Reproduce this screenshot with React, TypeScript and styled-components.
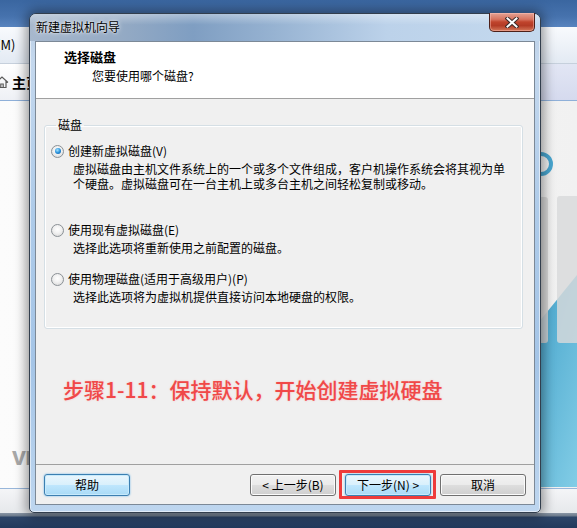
import React from "react";
import styled, { createGlobalStyle, css } from "styled-components";

const CJK = `"Noto Sans CJK SC", "Noto Sans", sans-serif`;

const GlobalStyle = createGlobalStyle`
  html, body { margin: 0; padding: 0; }
  body {
    width: 577px; height: 528px; overflow: hidden;
    font-family: ${CJK}; font-size: 12px; color: #000;
  }
`;

const Desktop = styled.div`
  position: relative;
  width: 577px;
  height: 528px;
  overflow: hidden;
  display: flex;
  flex-direction: column;
  background: #f2f2f2;
`;

const HostTitleBar = styled.div`
  height: 27px;
  flex: none;
  background: linear-gradient(180deg, #3a66a0 0%, #4672ad 60%, #5884bf 100%);
`;

const MenuBar = styled.div`
  height: 36px;
  flex: none;
  display: flex;
  align-items: center;
  overflow: hidden;
  background: linear-gradient(180deg, #f8fafd 0%, #e3eaf3 100%);
  border-bottom: 1px solid #c6d0dc;
`;

const MenuItem = styled.span`
  margin-left: -17px;
  white-space: nowrap;
  font-size: 13px;
  line-height: 16px;
`;

const Toolbar = styled.div`
  height: 36px;
  flex: none;
  display: flex;
  align-items: stretch;
  background: linear-gradient(180deg, #e2e6f4 0%, #d5daee 100%);
  border-bottom: 1px solid #8fb0d9;
`;

const HomeTab = styled.div`
  display: flex;
  align-items: center;
  gap: 3px;
  margin-left: -5px;
  padding-right: 40px;
  background: linear-gradient(180deg, #ffffff 0%, #eef0f5 100%);
  font-weight: bold;
  font-size: 14px;
`;

const Content = styled.div`
  flex: 1;
  display: flex;
  justify-content: space-between;
  background: linear-gradient(90deg, #fcfcfc 0%, #f1f1f1 100%);
`;

const LeftPane = styled.div`
  display: flex;
  flex-direction: column;
  justify-content: flex-end;
  padding: 0 0 20px 12px;
`;

const Logo = styled.span`
  font-family: "Liberation Sans", Arial, sans-serif;
  font-weight: bold;
  font-size: 25px;
  line-height: 24px;
  letter-spacing: -1px;
  color: #a8a8a8;
`;

const StatusBar = styled.div`
  height: 24px;
  flex: none;
  border-top: 1px solid #98b6da;
  background: linear-gradient(180deg, #f4f5f7 0%, #e6e8eb 100%);
`;

const Taskbar = styled.div`
  height: 15px;
  flex: none;
  background: linear-gradient(180deg, #8a96a5 0px, #6c7a8c 3px, #2d4568 4px, #22395c 100%);
`;

/* ---------- dialog ---------- */

const Dialog = styled.div`
  position: absolute;
  left: 29px;
  top: 13px;
  width: 512px;
  height: 500px;
  box-sizing: border-box;
  display: flex;
  flex-direction: column;
  border: 1px solid #323e4d;
  border-radius: 7px 7px 5px 5px;
  background: linear-gradient(180deg, #b9cde3 0%, #c4d8ee 10%, #aecbe9 40%, #a5c5e7 70%, #bed6ef 100%);
  box-shadow: 0 0 12px 3px rgba(0, 0, 0, 0.4), inset 0 0 0 1px rgba(255, 255, 255, 0.55);
`;

const TitleBar = styled.div`
  height: 27px;
  flex: none;
  display: flex;
  justify-content: space-between;
  align-items: flex-start;
  padding-left: 6px;
  border-radius: 6px 6px 0 0;
  background:
    linear-gradient(180deg, rgba(255,255,255,0.35) 0%, rgba(255,255,255,0) 40%),
    linear-gradient(90deg, #a7b8cd 0%, #94aac4 18%, #7f9ec2 32%, #97b3d2 48%, #bcd2ea 70%, #c4d9ee 100%);
`;

const TitleText = styled.span`
  font-size: 12px;
  line-height: 25px;
  color: #000;
  text-shadow: 0 0 5px rgba(255, 255, 255, 0.9), 0 0 2px rgba(255, 255, 255, 0.9);
`;

const CloseButton = styled.div`
  width: 46px;
  height: 19px;
  margin-top: -1px;
  margin-right: 5px;
  box-sizing: border-box;
  display: flex;
  align-items: center;
  justify-content: center;
  border: 1px solid #4d2019;
  border-top: none;
  border-radius: 0 0 5px 5px;
  background: linear-gradient(180deg, #e4a394 0%, #d7735f 35%, #c0442c 50%, #b33b25 70%, #d4785a 100%);
  box-shadow: inset 0 0 0 1px rgba(255, 200, 190, 0.45);
`;

const Client = styled.div`
  flex: 1;
  margin: 0 5px 7px 5px;
  border: 1px solid #7c8997;
  background: #f0f0f0;
  display: flex;
  flex-direction: column;
  min-height: 0;
`;

const Header = styled.div`
  flex: none;
  box-sizing: border-box;
  height: 57px;
  padding: 7px 0 0 28px;
  background: #ffffff;
  border-bottom: 1px solid #a0a0a0;
`;

const HeaderTitle = styled.div`
  font-weight: bold;
  font-size: 13px;
  line-height: 16px;
`;

const HeaderSub = styled.div`
  margin: 3px 0 0 28px;
  font-size: 12px;
  line-height: 16px;
`;

const Body = styled.div`
  flex: 1;
  display: flex;
  flex-direction: column;
  padding: 0 11px 0 8px;
`;

const GroupBox = styled.fieldset`
  margin: 19px 0 0 0;
  padding: 11px 10px 24px 6px;
  border: 1px solid #d5dfe5;
  border-radius: 3px;
  min-width: 0;
  box-shadow: inset 0 0 0 1px #ffffff;
`;

const GroupLegend = styled.legend`
  padding: 0 2px;
  margin-left: 5px;
  font-size: 12px;
  line-height: 14px;
`;

const Option = styled.div<{ $spaced?: boolean }>`
  display: flex;
  flex-direction: column;
  margin-top: ${(p) => (p.$spaced ? "16px" : "0")};
`;

const OptionRow = styled.label`
  display: flex;
  align-items: center;
  gap: 4px;
  height: 16px;
  line-height: 16px;
`;

const Radio = styled.span<{ $checked?: boolean }>`
  position: relative;
  flex: none;
  width: 13px;
  height: 13px;
  box-sizing: border-box;
  border-radius: 50%;
  border: 1px solid #8b9196;
  background: radial-gradient(circle at 50% 40%, #ffffff 0%, #f1f1f1 45%, #d2d2d2 100%);
  ${(p) =>
    p.$checked &&
    css`
      &::after {
        content: "";
        position: absolute;
        left: 2.5px;
        top: 2.5px;
        width: 6px;
        height: 6px;
        border-radius: 50%;
        background: radial-gradient(circle at 40% 35%, #a6e4ff 0%, #2b93dc 50%, #0c4f98 100%);
      }
    `}
`;

const Desc = styled.div<{ $tall?: boolean }>`
  margin: 2px 0 0 22px;
  line-height: 15px;
  min-height: ${(p) => (p.$tall ? "45px" : "15px")};
`;

const DescLine = styled.div`
  height: 15px;
  line-height: 15px;
  white-space: nowrap;
`;

const Caption = styled.div`
  margin: 47px 0 0 19px;
  font-size: 21px;
  line-height: 26px;
  font-weight: 500;
  color: #f04848;
  text-shadow: 0 0 2px rgba(255, 130, 130, 0.45);
  white-space: nowrap;
`;

const Footer = styled.div`
  flex: none;
  display: flex;
  justify-content: space-between;
  padding: 9px 8px 8px 8px;
  border-top: 1px solid #a0a0a0;
`;

const ButtonGroup = styled.div`
  display: flex;
  gap: 9px;
`;

const Button = styled.button<{ $hot?: boolean }>`
  width: 86px;
  height: 22px;
  box-sizing: border-box;
  padding: 0;
  font-family: ${CJK};
  font-size: 12px;
  line-height: 18px;
  color: #000;
  border-radius: 3px;
  border: 1px solid #707070;
  background: linear-gradient(180deg, #f2f2f2 0%, #ebebeb 48%, #dddddd 52%, #cfcfcf 100%);
  box-shadow: inset 0 0 0 1px #fbfbfb;
  ${(p) =>
    p.$hot &&
    css`
      border-color: #3c7fb1;
      background: linear-gradient(180deg, #eaf6fd 0%, #d9f0fc 48%, #bee6fd 52%, #a9daf6 100%);
      box-shadow: inset 0 0 0 1px #c7eafc, 0 0 2px #5fb0e8;
    `}
`;

const HighlightWrap = styled.div`
  position: relative;
  display: flex;
`;

const RedBox = styled.span`
  position: absolute;
  left: -6px;
  right: -5px;
  top: -4px;
  bottom: -3px;
  border: 3px solid #ee3b3b;
  border-radius: 1px;
  pointer-events: none;
`;

const HomeIcon = () => (
  <svg width="14" height="14" viewBox="0 0 14 14">
    <path
      d="M1 7.5 L7 2 L13 7.5 M3 6 V12.5 H11 V6 M5.8 12.5 V9 H8.2 V12.5"
      fill="none"
      stroke="#5a5a5a"
      strokeWidth="1.2"
    />
  </svg>
);

const CloseGlyph = () => (
  <svg width="14" height="11" viewBox="0 0 14 11">
    <path d="M2.5 1.5 L11.5 9.5 M11.5 1.5 L2.5 9.5" stroke="#3b2a28" strokeWidth="4" strokeLinecap="square" />
    <path d="M2.5 1.5 L11.5 9.5 M11.5 1.5 L2.5 9.5" stroke="#ffffff" strokeWidth="2" strokeLinecap="square" />
  </svg>
);

const RightArt = () => (
  <svg width="60" height="386" viewBox="0 0 60 386">
    <defs>
      <linearGradient id="blueFill" x1="0" y1="0" x2="1" y2="1">
        <stop offset="0" stopColor="#3a9bc6" />
        <stop offset="1" stopColor="#82cde6" />
      </linearGradient>
    </defs>
    <polygon points="0,248 60,174 60,386 0,386" fill="url(#blueFill)" />
    <rect x="0" y="96" width="31" height="146" rx="3" fill="#d4d4d4" opacity="0.88" />
    <rect x="40" y="95" width="40" height="147" rx="3" fill="#d8d9da" opacity="0.82" />
    <circle cx="24" cy="63" r="10" fill="none" stroke="#49a6d0" strokeWidth="4" />
  </svg>
);

export default function App() {
  return (
    <>
      <GlobalStyle />
      <Desktop>
        <HostTitleBar />
        <MenuBar>
          <MenuItem>机(M)</MenuItem>
        </MenuBar>
        <Toolbar>
          <HomeTab>
            <HomeIcon />
            <span>主页</span>
          </HomeTab>
        </Toolbar>
        <Content>
          <LeftPane>
            <Logo>vmware</Logo>
          </LeftPane>
          <RightArt />
        </Content>
        <StatusBar />
        <Taskbar />

        <Dialog>
          <TitleBar>
            <TitleText>新建虚拟机向导</TitleText>
            <CloseButton>
              <CloseGlyph />
            </CloseButton>
          </TitleBar>
          <Client>
            <Header>
              <HeaderTitle>选择磁盘</HeaderTitle>
              <HeaderSub>您要使用哪个磁盘?</HeaderSub>
            </Header>
            <Body>
              <GroupBox>
                <GroupLegend>磁盘</GroupLegend>
                <Option>
                  <OptionRow>
                    <Radio $checked />
                    <span>创建新虚拟磁盘(V)</span>
                  </OptionRow>
                  <Desc $tall>
                    <DescLine>虚拟磁盘由主机文件系统上的一个或多个文件组成，客户机操作系统会将其视为单</DescLine>
                    <DescLine>个硬盘。虚拟磁盘可在一台主机上或多台主机之间轻松复制或移动。</DescLine>
                  </Desc>
                </Option>
                <Option $spaced>
                  <OptionRow>
                    <Radio />
                    <span>使用现有虚拟磁盘(E)</span>
                  </OptionRow>
                  <Desc>选择此选项将重新使用之前配置的磁盘。</Desc>
                </Option>
                <Option $spaced>
                  <OptionRow>
                    <Radio />
                    <span>使用物理磁盘(适用于高级用户)(P)</span>
                  </OptionRow>
                  <Desc>选择此选项将为虚拟机提供直接访问本地硬盘的权限。</Desc>
                </Option>
              </GroupBox>
              <Caption>步骤1-11：保持默认，开始创建虚拟硬盘</Caption>
            </Body>
            <Footer>
              <Button $hot>帮助</Button>
              <ButtonGroup>
                <Button>&lt; 上一步(B)</Button>
                <HighlightWrap>
                  <Button $hot>下一步(N) &gt;</Button>
                  <RedBox />
                </HighlightWrap>
                <Button>取消</Button>
              </ButtonGroup>
            </Footer>
          </Client>
        </Dialog>
      </Desktop>
    </>
  );
}
